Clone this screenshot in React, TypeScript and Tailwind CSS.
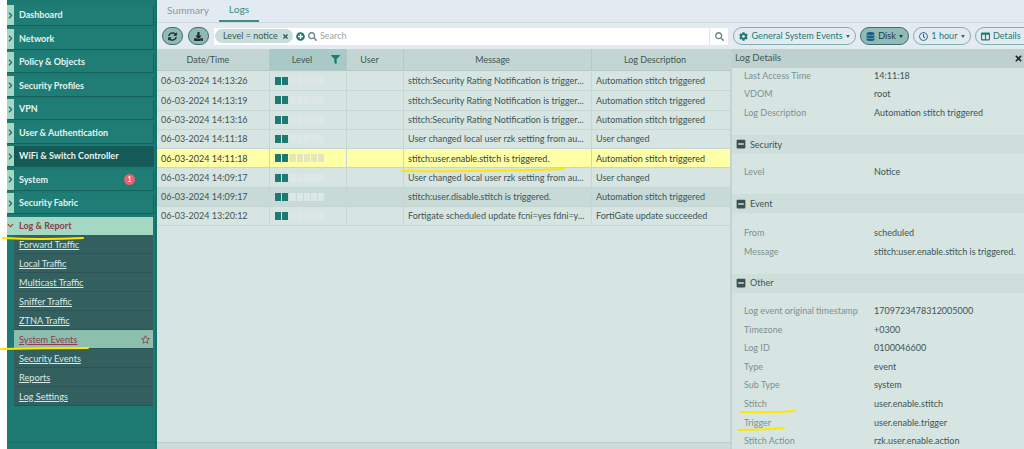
import {
  FaChevronRight,
  FaChevronDown,
  FaSyncAlt,
  FaDownload,
  FaTimes,
  FaPlusCircle,
  FaSearch,
  FaCog,
  FaDatabase,
  FaRegClock,
  FaColumns,
  FaFilter,
  FaMinusSquare,
  FaRegStar,
} from "react-icons/fa"

const menu = [
  { label: "Dashboard" },
  { label: "Network" },
  { label: "Policy & Objects" },
  { label: "Security Profiles" },
  { label: "VPN" },
  { label: "User & Authentication" },
  { label: "WiFi & Switch Controller", dark: true },
  { label: "System", badge: "1" },
  { label: "Security Fabric" },
]

const subMenu = [
  "Forward Traffic",
  "Local Traffic",
  "Multicast Traffic",
  "Sniffer Traffic",
  "ZTNA Traffic",
  "System Events",
  "Security Events",
  "Reports",
  "Log Settings",
]

const rows = [
  ["06-03-2024 14:13:26", "stitch:Security Rating Notification is trigger...", "Automation stitch triggered"],
  ["06-03-2024 14:13:19", "stitch:Security Rating Notification is trigger...", "Automation stitch triggered"],
  ["06-03-2024 14:13:16", "stitch:Security Rating Notification is trigger...", "Automation stitch triggered"],
  ["06-03-2024 14:11:18", "User changed local user rzk setting from au...", "User changed"],
  ["06-03-2024 14:11:18", "stitch:user.enable.stitch is triggered.", "Automation stitch triggered"],
  ["06-03-2024 14:09:17", "User changed local user rzk setting from au...", "User changed"],
  ["06-03-2024 14:09:17", "stitch:user.disable.stitch is triggered.", "Automation stitch triggered"],
  ["06-03-2024 13:20:12", "Fortigate scheduled update fcni=yes fdni=y...", "FortiGate update succeeded"],
]

const otherRows = [
  ["Log event original timestamp", "1709723478312005000"],
  ["Timezone", "+0300"],
  ["Log ID", "0100046600"],
  ["Type", "event"],
  ["Sub Type", "system"],
  ["Stitch", "user.enable.stitch"],
  ["Trigger", "user.enable.trigger"],
  ["Stitch Action", "rzk.user.enable.action"],
]

function Sidebar() {
  return (
    <div className="w-[150px] shrink-0 h-full bg-[#1d7a72] border-r-2 border-[#187068] pt-[5px] flex flex-col">
      <div className="mr-[2px] flex flex-col gap-[3.5px]">
        {menu.map((item) => (
          <div
            key={item.label}
            className={`h-[20px] flex items-center shadow-[1px_1px_0_#14625c] ${item.dark ? "bg-[#155a56]" : "bg-[#1f7d75]"}`}
          >
            <div className="w-[7px] h-full bg-[#a5d8c2] flex items-center justify-center text-[#14625c]">
              <FaChevronRight size={7} />
            </div>
            <span className="pl-[5px] text-[9px] font-bold text-[#e8f3f1]">{item.label}</span>
            {item.badge && (
              <span className="ml-auto mr-[18px] w-[11px] h-[11px] rounded-full bg-[#ef5f72] text-white text-[7px] font-bold flex items-center justify-center">
                {item.badge}
              </span>
            )}
          </div>
        ))}
      </div>
      <div className="mr-[2px] mt-[3.5px] h-[18.5px] bg-[#a5d8c2] flex items-center">
        <div className="w-[7px] flex items-center justify-center text-[#8e3b4c]">
          <FaChevronDown size={7} />
        </div>
        <span className="pl-[5px] text-[9px] font-bold text-[#8e3b4c]">Log &amp; Report</span>
      </div>
      <div className="ml-[7px] mr-[2px] flex flex-col">
        {subMenu.map((label) => {
          const active = label === "System Events"
          return (
            <div
              key={label}
              className={`h-[19px] flex items-center justify-between pt-[1px] pl-[5px] pr-[3px] border-b border-[#2a5457] ${active ? "bg-[#8dbfae]" : "bg-[#33605f]"}`}
            >
              <span className={`text-[9.2px] underline ${active ? "text-[#8e3b4c]" : "text-[#dbe8e6]"}`}>{label}</span>
              {active && <FaRegStar size={9} className="text-[#8e3b4c]" />}
            </div>
          )
        })}
      </div>
      <div className="mt-auto h-[7px] shrink-0 border-t border-[#187068]" />
    </div>
  )
}

function Pill({ icon, label, active }: { icon: React.ReactNode; label: string; active?: boolean }) {
  return (
    <div
      className={`h-[18px] shrink-0 rounded-full border flex items-center gap-[3.5px] pl-[5px] pr-[4.5px] text-[9.1px] ${
        active ? "bg-[#8fbab5] border-[#3e6f6c] text-[#1f3d3b]" : "bg-[#e3eaf1] border-[#7fb0ab] text-[#1d7a72]"
      }`}
    >
      {icon}
      <span>{label}</span>
      <span className="w-0 h-0 border-x-[2.5px] border-x-transparent border-t-[3px] border-t-current" />
    </div>
  )
}

function LevelBar({ highlight }: { highlight?: boolean }) {
  return (
    <div className="flex gap-[1px]">
      {[0, 1, 2, 3, 4, 5, 6].map((i) => (
        <span
          key={i}
          className={`w-[6.2px] h-[8px] ${i < 2 ? "bg-[#1d7a72]" : highlight ? "bg-[#e2e8bc]" : "bg-[#dde7e5]"}`}
        />
      ))}
    </div>
  )
}

function LogTable() {
  return (
    <div className="w-[573px] shrink-0 h-full flex flex-col">
      <div className="h-[22px] shrink-0 flex text-[9px] text-[#3f5553] bg-[#c3d6d3] border-b border-[#b4c8c5]">
        <div className="w-[113px] pr-[10px] flex items-center justify-center border-r border-[#b4c8c5]">Date/Time</div>
        <div className="w-[77px] pr-[12px] relative flex items-center justify-center bg-[#a9c9c6] border-r border-[#b4c8c5]">
          Level
          <FaFilter size={9} className="absolute right-[6px] top-[6px] text-[#1d7a72]" />
        </div>
        <div className="w-[57px] pr-[11px] flex items-center justify-center border-r border-[#b4c8c5]">User</div>
        <div className="w-[188px] pr-[10px] flex items-center justify-center border-r border-[#b4c8c5]">Message</div>
        <div className="flex-1 pr-[12px] flex items-center justify-center">Log Description</div>
      </div>
      <div className="flex flex-col pt-[1px]">
        {rows.map((row, i) => {
          const selected = i === 4
          return (
            <div
              key={i}
              className={`h-[19.3px] flex items-center text-[9px] text-[#3f5553] border-b border-[#c5d6d3] ${
                selected ? "bg-[#ffffa8] text-[#37403a]" : i === 6 ? "bg-[#c8dad8]" : ""
              }`}
            >
              <div className="w-[113px] h-full flex items-center pl-[4px] border-r border-[#c5d6d3]">{row[0]}</div>
              <div className="w-[77px] h-full flex items-center pl-[5px] border-r border-[#c5d6d3]">
                <LevelBar highlight={selected} />
              </div>
              <div className="w-[57px] h-full border-r border-[#c5d6d3]" />
              <div className="w-[188px] h-full flex items-center pl-[4px] whitespace-nowrap overflow-hidden border-r border-[#c5d6d3]">
                {row[1]}
              </div>
              <div className="flex-1 pl-[4px] whitespace-nowrap">{row[2]}</div>
            </div>
          )
        })}
      </div>
      <div className="mt-auto h-[7px] shrink-0 bg-[#cbdcda] border-t border-[#bccdcb]" />
    </div>
  )
}

function DetailRow({ label, value }: { label: string; value: string }) {
  return (
    <div className="h-[18.6px] shrink-0 flex items-center text-[9px]">
      <span className="w-[142px] shrink-0 pl-[12px] text-[#7d918f] whitespace-nowrap">{label}</span>
      <span className="text-[#3f5553] whitespace-nowrap">{value}</span>
    </div>
  )
}

function SectionHead({ label }: { label: string }) {
  return (
    <div className="h-[19px] flex items-center gap-[4px] pl-[4px] bg-[#cddedb] text-[9px] text-[#3f5553]">
      <FaMinusSquare size={10} className="text-[#3f4f4e]" />
      {label}
    </div>
  )
}

function DetailsPanel() {
  return (
    <div className="flex-1 h-full border-l-2 border-[#c3d3d1] flex flex-col overflow-hidden">
      <div className="h-[19px] shrink-0 flex items-center justify-between pl-[3px] pr-[1px] bg-[#bfd1cf] text-[9.5px] text-[#3f5553]">
        Log Details
        <FaTimes size={9} className="text-[#1f2d2c]" />
      </div>
      <div className="-mt-[2px]">
        <DetailRow label="Last Access Time" value="14:11:18" />
        <DetailRow label="VDOM" value="root" />
        <DetailRow label="Log Description" value="Automation stitch triggered" />
      </div>
      <div className="mt-[13px]">
        <SectionHead label="Security" />
      </div>
      <div className="mt-[9px]">
        <DetailRow label="Level" value="Notice" />
      </div>
      <div className="mt-[13px]">
        <SectionHead label="Event" />
      </div>
      <div className="mt-[10px]">
        <DetailRow label="From" value="scheduled" />
        <DetailRow label="Message" value="stitch:user.enable.stitch is triggered." />
      </div>
      <div className="mt-[13px]">
        <SectionHead label="Other" />
      </div>
      <div className="mt-[9px]">
        {otherRows.map((row) => (
          <DetailRow key={row[0]} label={row[0]} value={row[1]} />
        ))}
      </div>
    </div>
  )
}

export default function App() {
  return (
    <div className="relative w-[1024px] h-[449px] overflow-hidden flex bg-white font-['Lato',sans-serif]">
      <div className="w-[7px] shrink-0" />
      <Sidebar />
      <div className="flex-1 min-w-0 h-full flex flex-col bg-[#d6e4e2]">
        <div className="h-[23px] shrink-0 flex items-start bg-[#e3eaf1] border-b border-[#cdd9dc] text-[10.2px]">
          <div className="w-[62px] h-[22px] flex items-center justify-center text-[#8a9a9c]">Summary</div>
          <div className="w-[40px] h-[22px] flex items-center justify-center text-[#3d8f88] border-b-2 border-[#3d8f88]">Logs</div>
        </div>
        <div className="h-[26px] shrink-0 flex items-center gap-[5px] pl-[5px] bg-[#e3eaf1] overflow-hidden">
          <div className="w-[21px] h-[18px] shrink-0 rounded-full border border-[#3e6f6c] bg-[#8fbab5] flex items-center justify-center text-[#1f2d2c]">
            <FaSyncAlt size={9} />
          </div>
          <div className="w-[21px] h-[18px] shrink-0 rounded-full border border-[#3e6f6c] bg-[#8fbab5] flex items-center justify-center text-[#1f2d2c]">
            <FaDownload size={9} />
          </div>
          <div className="w-[514px] shrink-0 h-[17px] bg-white flex items-center gap-[3px] pl-[1px] text-[9px]">
            <div className="w-[78px] h-[14px] flex items-center justify-between pl-[8px] pr-[4px] rounded-full bg-[#c8dedb] text-[#3f5553] whitespace-nowrap">
              Level = notice
              <FaTimes size={7} />
            </div>
            <FaPlusCircle size={9} className="text-[#1d7a72]" />
            <FaSearch size={9} className="text-[#6f8583]" />
            <span className="text-[#9aa6a5]">Search</span>
            <div className="ml-auto w-[19px] h-full border-l border-[#dfe6e6] flex items-center justify-center">
              <FaSearch size={9} className="text-[#6f8583]" />
            </div>
          </div>
          <div className="flex items-center gap-[4px]">
            <Pill icon={<FaCog size={9} />} label="General System Events" />
            <Pill active icon={<FaDatabase size={9} className="text-[#1d5f8a]" />} label="Disk" />
            <Pill icon={<FaRegClock size={9} className="text-[#1d5f8a]" />} label="1 hour" />
            <Pill icon={<FaColumns size={9} />} label="Details" />
          </div>
        </div>
        <div className="flex-1 min-h-0 flex">
          <LogTable />
          <DetailsPanel />
        </div>
      </div>
      <svg className="absolute inset-0 pointer-events-none" width="1024" height="449" fill="none" stroke="#ffe600" strokeWidth="2" strokeLinecap="round">
        <path d="M3 238 Q40 240 83 238" />
        <path d="M1 349 Q45 348 88 348" />
        <path d="M402 171 Q480 172 564 169" />
        <path d="M741 412 Q770 413 795 411" />
        <path d="M738 430 Q760 430 784 428" />
      </svg>
    </div>
  )
}
